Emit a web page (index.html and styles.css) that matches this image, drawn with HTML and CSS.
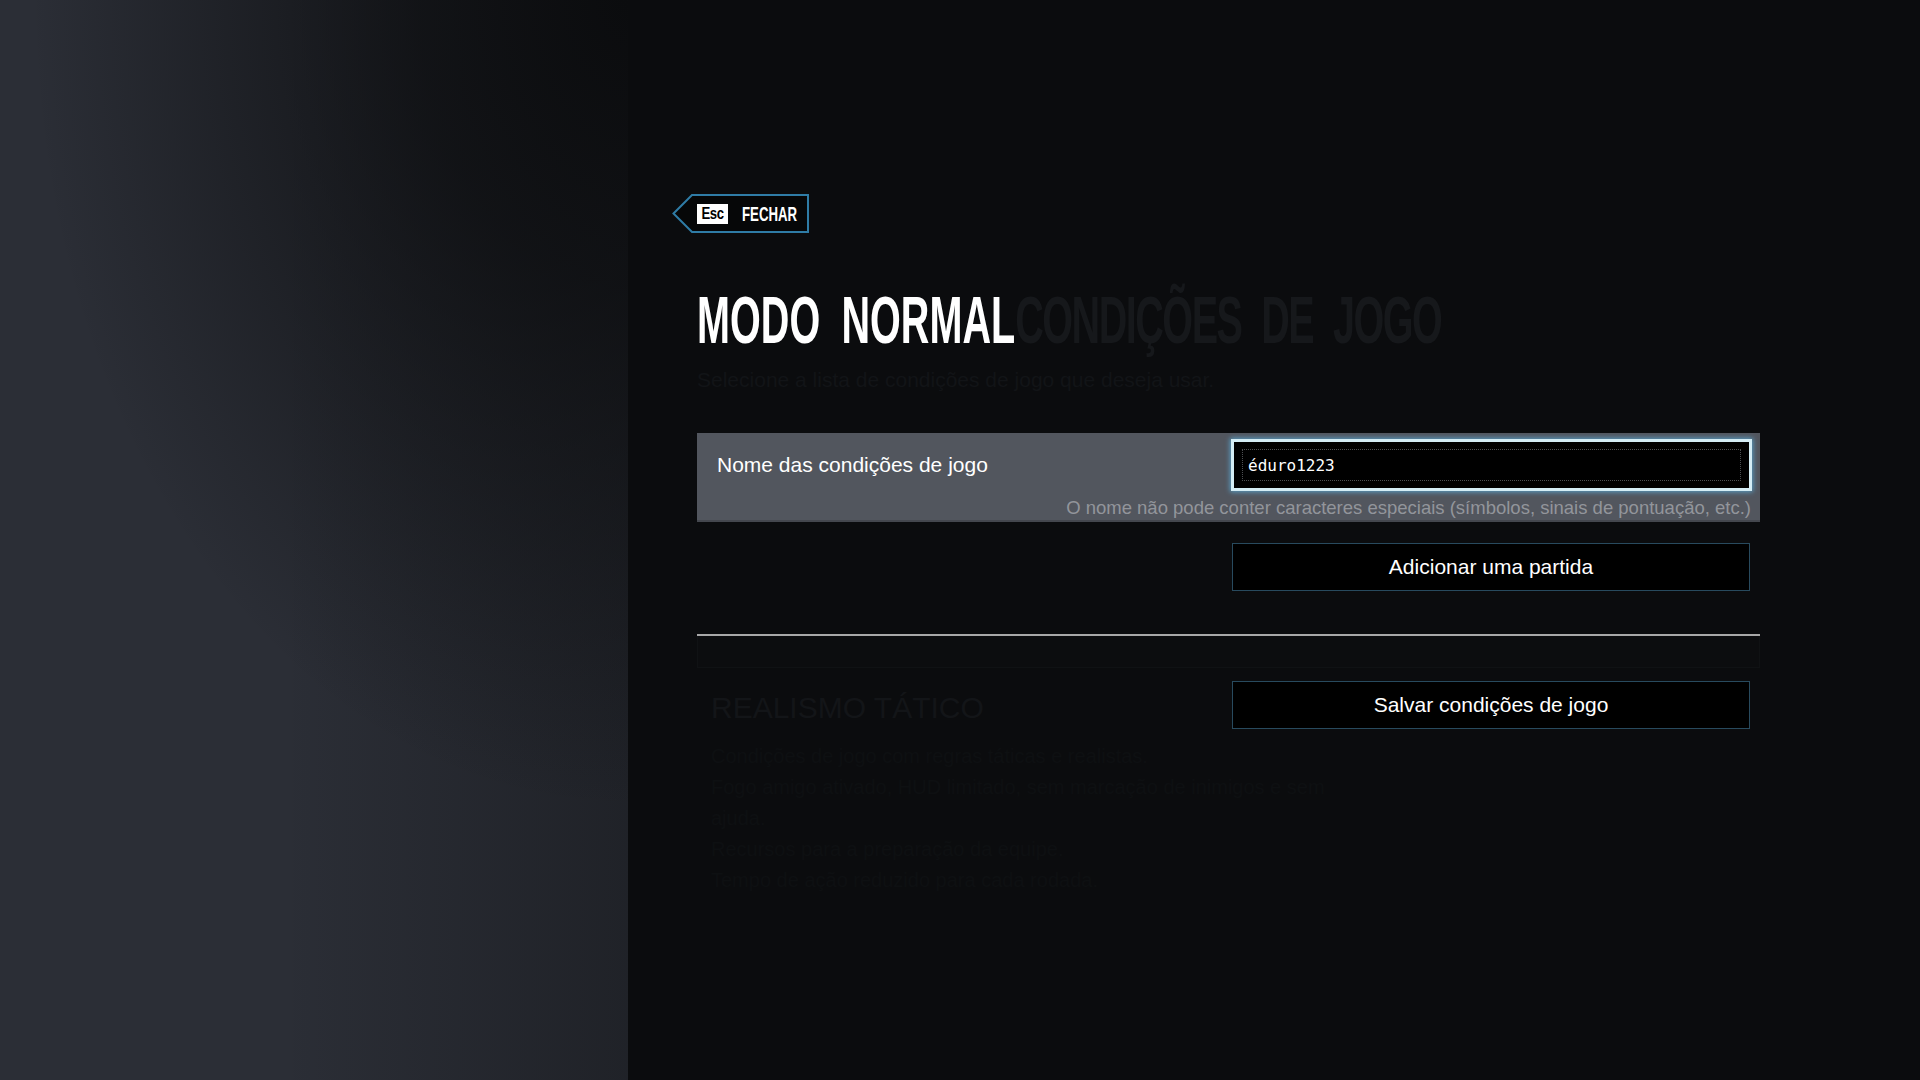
FILE: index.html
```html
<!DOCTYPE html>
<html lang="pt">
<head>
<meta charset="utf-8">
<title>Modo Normal - Condições de jogo</title>
<link rel="stylesheet" href="styles.css">
</head>
<body>
<div class="screen">
  <aside class="side"></aside>
  <main class="main">
    <button class="close-btn" type="button">
      <svg class="close-shape" viewBox="0 0 137 39" width="137" height="39" aria-hidden="true">
        <polygon points="1.5,19.5 20,1 136,1 136,38 20,38" fill="#060708" stroke="#2f7ca6" stroke-width="2"/>
      </svg>
      <span class="esc-key"><span class="esc-text">Esc</span></span>
      <span class="close-label">FECHAR</span>
    </button>

    <h1 class="title"><span class="title-inner"><span class="title-main">MODO NORMAL</span><span class="title-ghost">CONDIÇÕES DE JOGO</span></span></h1>
    <p class="subtitle">Selecione a lista de condições de jogo que deseja usar.</p>

    <section class="name-panel">
      <div class="name-label">Nome das condições de jogo</div>
      <div class="name-input"><div class="name-field">éduro1223</div></div>
      <p class="name-hint">O nome não pode conter caracteres especiais (símbolos, sinais de pontuação, etc.)</p>
    </section>

    <div class="add-row">
      <button class="action-btn" type="button">Adicionar uma partida</button>
    </div>
    <div class="divider"></div>
    <div class="ghost-strip"></div>

    <div class="lower">
      <div class="ghost-list">
        <h2 class="ghost-heading">REALISMO TÁTICO</h2>
        <p class="ghost-line">Condições de jogo com regras táticas e realistas.</p>
        <p class="ghost-line">Fogo amigo ativado, HUD limitado, sem marcação de inimigos e sem</p>
        <p class="ghost-line">ajuda.</p>
        <p class="ghost-line">Recursos para a preparação da equipe.</p>
        <p class="ghost-line">Tempo de ação reduzido para cada rodada.</p>
      </div>
      <button class="action-btn" type="button">Salvar condições de jogo</button>
    </div>
  </main>
</div>
</body>
</html>
```

FILE: styles.css
```css
* { box-sizing: border-box; }

html, body {
  margin: 0;
  padding: 0;
  width: 1920px;
  height: 1080px;
  overflow: hidden;
  background: #0b0c0e;
  font-family: "Liberation Sans", Arial, sans-serif;
  color: #ffffff;
}

.screen {
  display: flex;
  width: 1920px;
  height: 1080px;
}

.side {
  flex: 0 0 628px;
  height: 1080px;
  background:
    radial-gradient(ellipse 95% 75% at 100% 0%, rgba(11,12,14,1) 0%, rgba(11,12,14,0.75) 35%, rgba(11,12,14,0) 100%),
    linear-gradient(to right, rgba(11,12,14,0) 45%, rgba(11,12,14,0.35) 100%),
    #2b2e36;
}

.main {
  flex: 0 0 1292px;
  width: 1292px;
  min-width: 0;
  display: flex;
  flex-direction: column;
  align-items: stretch;
  padding: 194px 160px 0 69px;
}

/* Close button */
.close-btn {
  position: relative;
  display: flex;
  align-items: center;
  align-self: flex-start;
  flex: none;
  width: 137px;
  height: 39px;
  margin: 0 0 0 -25px;
  padding: 0 0 0 25px;
  border: 0;
  background: none;
  color: #fff;
  font-family: "Liberation Sans", Arial, sans-serif;
  overflow: visible;
  cursor: pointer;
}

.close-shape {
  position: absolute;
  left: 0;
  top: 0;
  z-index: 0;
}

.esc-key {
  position: relative;
  z-index: 1;
  flex: 0 0 31px;
  display: flex;
  align-items: center;
  justify-content: center;
  width: 31px;
  height: 20px;
  background: #ffffff;
  overflow: hidden;
}

.esc-text {
  display: inline-block;
  flex: none;
  color: #000;
  font-weight: 700;
  font-size: 16px;
  line-height: 16px;
  letter-spacing: -0.5px;
  transform: scaleX(0.82);
}

.close-label {
  position: relative;
  z-index: 1;
  flex: none;
  display: inline-block;
  margin-left: 14px;
  margin-right: -40px;
  font-weight: 700;
  font-size: 21px;
  line-height: 22px;
  transform: scaleX(0.63);
  transform-origin: left center;
  white-space: nowrap;
}

/* Title */
.title {
  margin: 54px 0 0 0;
  height: 66px;
  font-size: 66px;
  line-height: 66px;
  font-weight: 700;
  white-space: nowrap;
}

.title-inner {
  display: inline-block;
  transform: scaleX(0.6);
  transform-origin: left center;
  word-spacing: 17px;
}

.title-main { color: #ffffff; }
.title-ghost {
  color: #16181b;
  letter-spacing: -2.5px;
}

.subtitle {
  margin: 15px 0 0 0;
  font-size: 21px;
  line-height: 24px;
  color: #121417;
}

/* Name panel */
.name-panel {
  margin-top: 41px;
  display: grid;
  grid-template-columns: minmax(0, 1fr) 521px;
  align-items: center;
  padding: 6px 8px 1px 20px;
  background: #52565e;
  border-bottom: 2px solid #44474e;
}

.name-label {
  font-size: 21px;
  line-height: 24px;
  color: #ffffff;
}

.name-input {
  height: 52px;
  padding: 7px 8px;
  background: #000;
  border: 3px solid #d4edf5;
  box-shadow: 0 0 5px 1px rgba(90, 170, 215, 0.85);
}

.name-field {
  height: 32px;
  display: flex;
  align-items: center;
  padding-left: 5px;
  border: 1px dotted #4d4f52;
  font-family: "DejaVu Sans Mono", "Liberation Mono", monospace;
  font-size: 16px;
  color: #ffffff;
}

.name-hint {
  grid-column: 1 / -1;
  margin: 6px 1px 0 0;
  text-align: right;
  font-size: 18.5px;
  line-height: 22px;
  color: #92959b;
  white-space: nowrap;
}

/* Buttons */
.add-row {
  display: flex;
  justify-content: flex-end;
  padding: 21px 10px 43px 0;
}

.action-btn {
  flex: none;
  width: 518px;
  height: 48px;
  border: 1px solid #284a5e;
  background: #000;
  color: #ffffff;
  font-family: "Liberation Sans", Arial, sans-serif;
  font-size: 21px;
  line-height: 24px;
  padding: 0;
  cursor: pointer;
}

.divider {
  height: 2px;
  background: #a8a8a8;
}

.ghost-strip {
  height: 32px;
  background: #0c0d0f;
  border: 1px solid #101214;
  border-top: 0;
}

.lower {
  display: flex;
  justify-content: space-between;
  align-items: flex-start;
  margin-top: 13px;
  padding: 0 10px 0 14px;
}

.ghost-list {
  flex: 1 1 0;
  min-width: 0;
  padding-top: 10px;
  white-space: nowrap;
}

.ghost-heading {
  margin: 0;
  font-size: 30px;
  line-height: 34px;
  font-weight: 400;
  color: #131518;
}

.ghost-line {
  margin: 0;
  font-size: 20px;
  line-height: 31px;
  color: #0e1012;
}

.ghost-heading + .ghost-line { margin-top: 16px; }
```
